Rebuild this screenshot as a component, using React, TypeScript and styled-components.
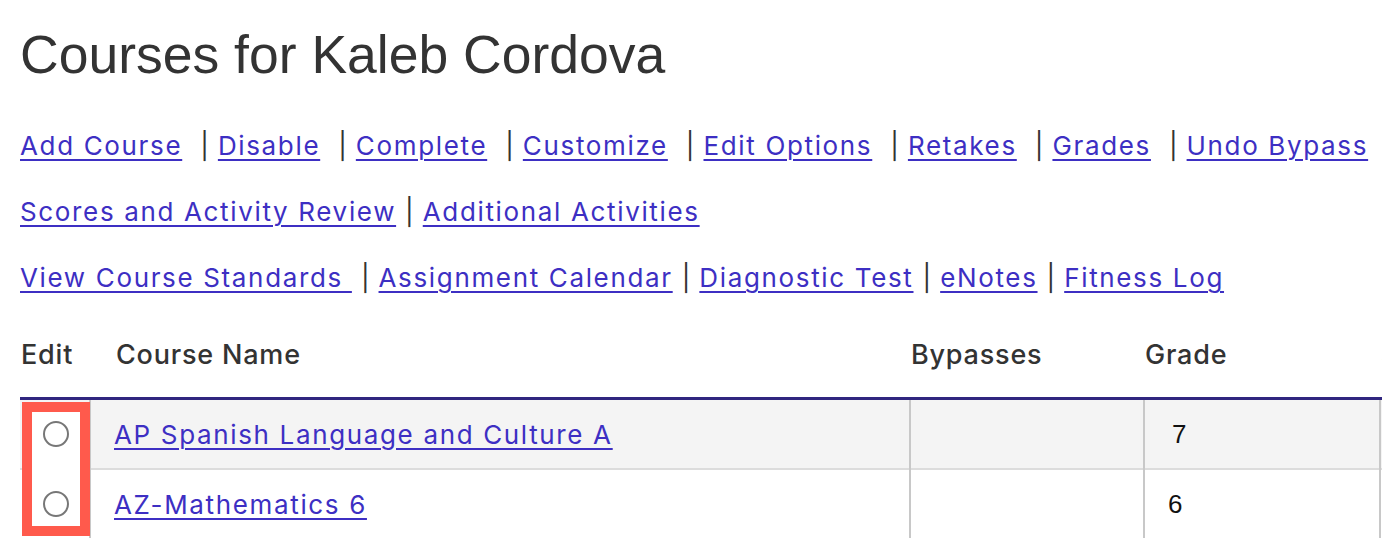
import React from "react";
import styled, { createGlobalStyle } from "styled-components";

const Global = createGlobalStyle`
  html, body { margin: 0; padding: 0; background: #fff; }
  body { overflow: hidden; font-family: Inter, "Noto Sans", sans-serif; }
`;

const Page = styled.div`
  width: 1382px;
  height: 538px;
  overflow: hidden;
  padding-left: 20px;
  box-sizing: border-box;
`;

const Title = styled.h1`
  margin: 24px 0 0 0;
  font-family: "Liberation Sans", Arial, sans-serif;
  font-weight: 400;
  font-size: 53.5px;
  line-height: 61px;
  color: #333;
`;

const Links = styled.div`
  margin-top: 28px;
`;

const LinkRow = styled.div`
  font-size: 26px;
  line-height: 66px;
  white-space: nowrap;
  color: #333;
`;

const A = styled.a`
  color: #3d2fc3;
  text-decoration: underline;
  text-underline-offset: 4px;
  text-decoration-thickness: 2px;
  letter-spacing: 1.65px;
  cursor: pointer;
`;

const Sep = styled.span<{ $wide?: boolean }>`
  color: #333;
  letter-spacing: 0;
  margin-left: ${(p) => (p.$wide ? "18px" : "9px")};
  margin-right: 9px;
`;

const Table = styled.table`
  border-collapse: collapse;
  table-layout: fixed;
  width: 1600px;
`;

const Th = styled.th<{ $pad?: number }>`
  height: 86px;
  padding: 0 0 0 ${(p) => p.$pad ?? 1}px;
  text-align: left;
  vertical-align: middle;
  font-size: 27px;
  font-weight: 500;
  letter-spacing: 0.8px;
  color: #333;
  border-bottom: 3px solid #30267f;
  white-space: nowrap;
`;

const Tr = styled.tr<{ $shade?: boolean }>`
  background: ${(p) => (p.$shade ? "#f4f4f4" : "#fff")};
  border-bottom: 2px solid #dcdcdc;
`;

const Td = styled.td`
  height: 68px;
  padding: 0 0 0 23px;
  vertical-align: middle;
  border-left: 2px solid #c8c8c8;
  font-size: 26px;
`;

const EditTd = styled.td`
  position: relative;
  height: 68px;
  padding: 0;
  text-align: center;
  vertical-align: middle;
`;

const Highlight = styled.div`
  position: absolute;
  left: 2px;
  top: 2px;
  width: 68px;
  height: 134px;
  box-sizing: border-box;
  border: 10px solid #ff5a4c;
  background: #fff;
  z-index: 1;
  pointer-events: none;
`;

const Radio = styled.input.attrs({ type: "radio" })`
  appearance: none;
  position: relative;
  z-index: 2;
  width: 26px;
  height: 26px;
  margin: 0;
  border: 2px solid #777;
  border-radius: 50%;
  background: #fff;
  vertical-align: middle;
  box-sizing: border-box;
  left: 1px;
`;

const Grade = styled.span<{ $indent?: number }>`
  display: inline-block;
  margin-left: ${(p) => p.$indent ?? 0}px;
  font-family: "Liberation Sans", Arial, sans-serif;
  font-size: 26px;
  color: #111;
`;

const row1 = [
  "Add Course",
  "Disable",
  "Complete",
  "Customize",
  "Edit Options",
  "Retakes",
  "Grades",
  "Undo Bypass",
];
const row2 = ["Scores and Activity Review", "Additional Activities"];
const row3 = [
  "View Course Standards\u00a0",
  "Assignment Calendar",
  "Diagnostic Test",
  "eNotes",
  "Fitness Log",
];

function LinkLine({ items, wide }: { items: string[]; wide?: boolean }) {
  return (
    <LinkRow>
      {items.map((t, i) => (
        <React.Fragment key={t}>
          {i > 0 && <Sep $wide={wide}>|</Sep>}
          <A>{t}</A>
        </React.Fragment>
      ))}
    </LinkRow>
  );
}

const courses = [
  { name: "AP Spanish Language and Culture A", grade: "7", indent: 4, shade: true },
  { name: "AZ-Mathematics 6", grade: "6", indent: 0, shade: false },
];

export default function App() {
  return (
    <Page>
      <Global />
      <Title>Courses for Kaleb Cordova</Title>
      <Links>
        <LinkLine items={row1} wide />
        <LinkLine items={row2} />
        <LinkLine items={row3} />
      </Links>
      <Table>
        <colgroup>
          <col style={{ width: 70 }} />
          <col style={{ width: 820 }} />
          <col style={{ width: 234 }} />
          <col style={{ width: 236 }} />
          <col style={{ width: 240 }} />
        </colgroup>
        <thead>
          <tr>
            <Th>Edit</Th>
            <Th $pad={26}>Course Name</Th>
            <Th>Bypasses</Th>
            <Th>Grade</Th>
            <Th>Status</Th>
          </tr>
        </thead>
        <tbody>
          {courses.map((c, i) => (
            <Tr key={c.name} $shade={c.shade}>
              <EditTd>
                {i === 0 && <Highlight />}
                <Radio name="edit" />
              </EditTd>
              <Td>
                <A>{c.name}</A>
              </Td>
              <Td />
              <Td>
                <Grade $indent={c.indent}>{c.grade}</Grade>
              </Td>
              <Td />
            </Tr>
          ))}
        </tbody>
      </Table>
    </Page>
  );
}
